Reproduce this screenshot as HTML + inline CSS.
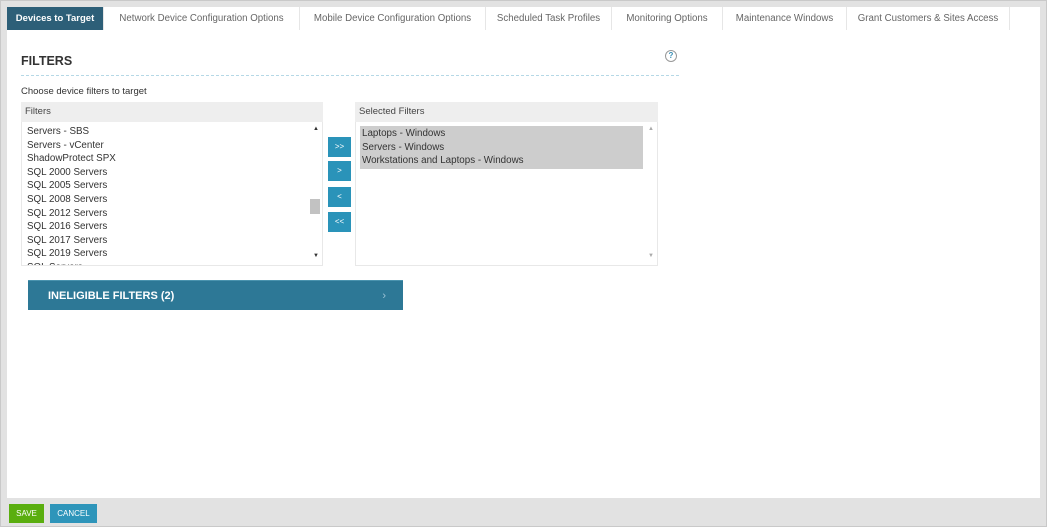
<!DOCTYPE html>
<html><head><style>
*{margin:0;padding:0;box-sizing:border-box}
body{width:1047px;height:527px;background:#c9c9c9;font-family:"Liberation Sans",sans-serif;font-size:10px;color:#333;position:relative;overflow:hidden}
.frame{position:absolute;left:1px;top:1px;width:1045px;height:525px;background:#e2e2e2}
.page{position:absolute;left:7px;top:7px;width:1033px;height:491px;background:#fff}
.tab{position:absolute;top:7px;height:23px;line-height:24px;text-align:center;color:#666;font-size:9.7px;border-right:1px solid #e6e6e6;background:#fff}
.tab.a{background:#2d5f78;color:#fff;font-weight:bold;font-size:9.5px}
.abs{position:absolute}
.hdr{background:#eeeeee;height:20px;line-height:20px;padding-left:4px;font-size:9.5px;color:#444}
.list{border:1px solid #e8e8e8;border-top:none;background:#fff}
.item{height:13.6px;line-height:13.6px;font-size:9.8px;color:#333}
.btn{position:absolute;left:328px;width:23px;height:20px;background:#2a93b9;color:#fff;font-size:8px;text-align:center;line-height:20px}
</style></head><body>
<div class="frame"></div>
<div class="page"></div>
<div class="tab a" style="left:7px;width:97px">Devices to Target</div>
<div class="tab" style="left:104px;width:196px">Network Device Configuration Options</div>
<div class="tab" style="left:300px;width:186px">Mobile Device Configuration Options</div>
<div class="tab" style="left:486px;width:126px">Scheduled Task Profiles</div>
<div class="tab" style="left:612px;width:111px">Monitoring Options</div>
<div class="tab" style="left:723px;width:124px">Maintenance Windows</div>
<div class="tab" style="left:847px;width:163px">Grant Customers &amp; Sites Access</div>

<div class="abs" style="left:21px;top:54px;font-size:12.5px;font-weight:bold;color:#333">FILTERS</div>
<div class="abs" style="left:665px;top:50px;width:12px;height:12px;border:1px solid #999;border-radius:50%;font-size:8px;color:#3a8fb5;text-align:center;line-height:10px;font-weight:bold">?</div>
<div class="abs" style="left:21px;top:75px;width:658px;border-top:1px dashed #b5d8e6"></div>
<div class="abs" style="left:21px;top:86px;font-size:9.5px;color:#333">Choose device filters to target</div>

<div class="abs" style="left:21px;top:102px;width:302px">
<div class="hdr">Filters</div>
<div class="list" style="height:144px;position:relative;overflow:hidden;padding:3px 0 0 5px">
<div class="item">Servers - SBS</div><div class="item">Servers - vCenter</div><div class="item">ShadowProtect SPX</div><div class="item">SQL 2000 Servers</div><div class="item">SQL 2005 Servers</div><div class="item">SQL 2008 Servers</div><div class="item">SQL 2012 Servers</div><div class="item">SQL 2016 Servers</div><div class="item">SQL 2017 Servers</div><div class="item">SQL 2019 Servers</div><div class="item">SQL Servers</div>
<div class="abs" style="right:0;top:0;width:14px;height:144px;background:#fff"></div>
<div class="abs" style="right:2px;top:77px;width:10px;height:15px;background:#c2c2c2"></div>
<div class="abs" style="right:3px;top:4px;font-size:6px;color:#333">▲</div>
<div class="abs" style="right:3px;top:131px;font-size:6px;color:#333">▼</div>
</div></div>

<div class="btn" style="top:137px">&gt;&gt;</div>
<div class="btn" style="top:161px">&gt;</div>
<div class="btn" style="top:187px">&lt;</div>
<div class="btn" style="top:212px">&lt;&lt;</div>

<div class="abs" style="left:355px;top:102px;width:303px">
<div class="hdr">Selected Filters</div>
<div class="list" style="height:144px;position:relative;padding:4px 0 0 4px">
<div style="background:#cdcdcd;width:283px;padding:1px 0 1px 2px">
<div class="item">Laptops - Windows</div><div class="item">Servers - Windows</div><div class="item">Workstations and Laptops - Windows</div></div>
<div class="abs" style="right:3px;top:4px;font-size:6px;color:#aaa">▲</div>
<div class="abs" style="right:3px;top:131px;font-size:6px;color:#aaa">▼</div>
</div></div>

<div class="abs" style="left:28px;top:280px;width:375px;height:30px;background:#2d7896;border-top:1px solid #4a93ae;color:#fff;font-weight:bold;font-size:11px;line-height:30px;padding-left:20px">INELIGIBLE FILTERS (2)<span style="position:absolute;right:17px;color:#9cc3d6;font-weight:normal">›</span></div>

<div class="abs" style="left:9px;top:504px;width:35px;height:19px;background:#5aae0f;color:#fff;font-size:8px;text-align:center;line-height:19px">SAVE</div>
<div class="abs" style="left:50px;top:504px;width:47px;height:19px;background:#2e95ba;color:#fff;font-size:8px;text-align:center;line-height:19px">CANCEL</div>
</body></html>
